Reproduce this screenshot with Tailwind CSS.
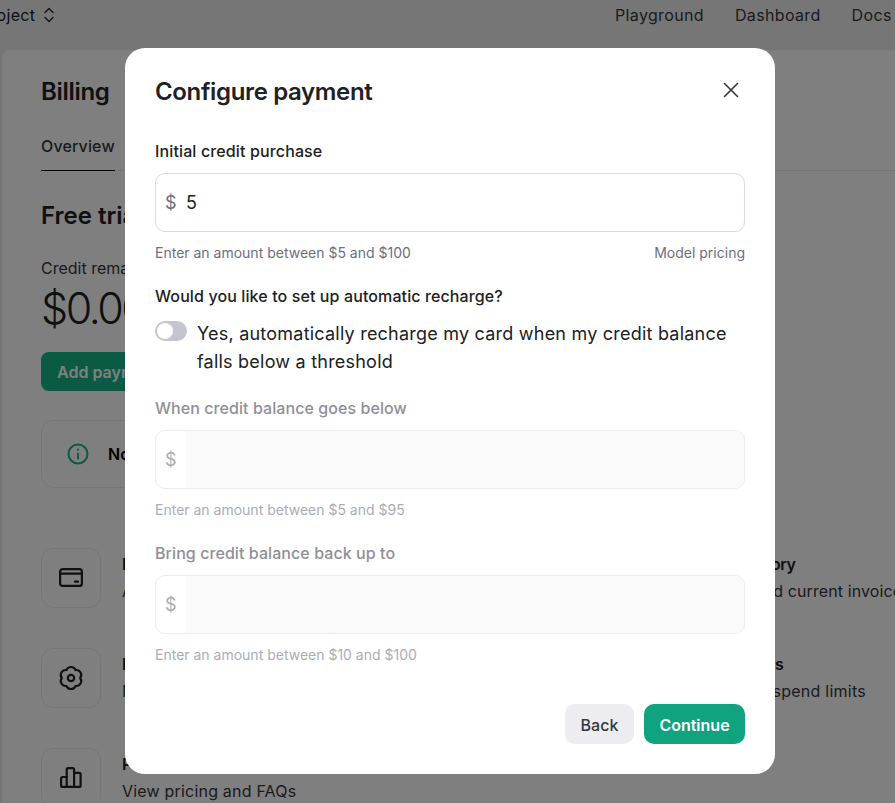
<!DOCTYPE html>
<html lang="en">
<head>
    <meta charset="UTF-8">
    <meta name="viewport" content="width=device-width, initial-scale=1.0">
    <title>Billing</title>
    <script src="https://cdn.jsdelivr.net/npm/@tailwindcss/browser@4"></script>
</head>
<body class="font-['Inter',sans-serif]">
    <div class="relative h-[803px] w-[895px] overflow-hidden bg-[#ededed] text-[#202123]">
        <!-- page behind the dialog -->
        <header class="flex h-[50px] items-center justify-between text-base tracking-[0.3px]">
            <div class="ml-[-20px] flex items-center gap-[6px] pb-[20px]">
                <span>Project</span>
                <svg class="h-4 w-4" viewBox="0 0 16 16" fill="none" stroke="currentColor" stroke-width="1.3" stroke-linecap="round" stroke-linejoin="round"><path d="M4 5.500l4-4 4 4M4 10.500l4 4 4-4"/></svg>
            </div>
            <nav class="flex w-[280px] gap-[31px] whitespace-nowrap pb-[20px] tracking-[0.35px] text-[#353740]">
                <span>Playground</span><span>Dashboard</span><span>Docs</span>
            </nav>
        </header>
        <main class="ml-[2px] h-[760px] rounded-tl-lg bg-white pl-[39px]">
            <h1 class="pt-[26px] text-2xl font-semibold leading-8 tracking-[-0.3px] text-[#202123]">Billing</h1>
            <div class="mt-[25px] h-[38px] border-b border-[#ececf1]">
                <div class="inline-block h-[38px] border-b border-black pt-[1px] text-base font-medium leading-6 tracking-[0.15px] text-[#353740]">Overview</div>
            </div>
            <h2 class="mt-[29px] text-2xl font-semibold leading-8">Free trial</h2>
            <p class="mt-[24px] text-base leading-6 text-[#353740]">Credit remaining</p>
            <p class="mt-[4px] text-[43px] font-light leading-[48px] tracking-[-2.5px]">$0.00</p>
            <button class="mt-[20px] block h-[39px] rounded-lg bg-[#15b589] px-4 text-base font-semibold text-white">Add payment details</button>
            <div class="mt-[29px] flex h-[68px] w-[700px] items-center gap-[19px] rounded-xl border border-[#ececf1] pl-[25px] pr-4">
                <svg class="h-[22px] w-[22px] text-[#15b589]" viewBox="0 0 22 22" fill="none" stroke="currentColor" stroke-width="2" stroke-linecap="round"><circle cx="11" cy="11" r="9.5"/><path d="M11 10.500v5"/><path d="M11 6.600v.1"/></svg>
                <span class="font-semibold text-black">Note</span>
            </div>
            <div class="mt-[60px] grid grid-cols-[634px_1fr] gap-y-[40px]">
                <div class="flex gap-[21px]">
                    <div class="flex h-[60px] w-[60px] items-center justify-center rounded-xl border border-[#ececf1]">
                        <svg class="h-7 w-7" viewBox="0 0 28 28" fill="none" stroke="#202123" stroke-width="2.2" stroke-linecap="round" stroke-linejoin="round"><rect x="3.100" y="5.100" width="21.800" height="16.800" rx="2.500"/><path d="M3.100 9.600h21.800"/><path d="M18 17.700h3"/></svg>
                    </div>
                    <div class="mt-[4px]"><p class="font-semibold leading-6">Payment</p><p class="mt-[3px] leading-6 text-[#353740]">Add or change</p></div>
                </div>
                <div class="mt-[4px] whitespace-nowrap"><p class="font-semibold leading-6 tracking-[-0.35px]">Payment history</p><p class="mt-[3px] leading-6 tracking-[0.1px] text-[#353740]">View past and current invoices</p></div>
                <div class="flex gap-[21px]">
                    <div class="flex h-[60px] w-[60px] items-center justify-center rounded-xl border border-[#ececf1]">
                        <svg class="h-7 w-7" viewBox="0 0 28 28" fill="none" stroke="#202123" stroke-width="2.2" stroke-linecap="round" stroke-linejoin="round"><path d="M18.600 6.030A5 5 0 0 1 23.200 14A5 5 0 0 1 18.600 21.970A5 5 0 0 1 9.400 21.970A5 5 0 0 1 4.800 14A5 5 0 0 1 9.400 6.030A5 5 0 0 1 18.600 6.030z"/><circle cx="14" cy="14" r="3.200"/></svg>
                    </div>
                    <div class="mt-[4px]"><p class="font-semibold leading-6">Preferences</p><p class="mt-[3px] leading-6 text-[#353740]">Manage</p></div>
                </div>
                <div class="mt-[4px] whitespace-nowrap"><p class="font-semibold leading-6">Monthly limits</p><p class="mt-[3px] leading-6 tracking-[0.25px] text-[#353740]">Set monthly spend limits</p></div>
                <div class="flex gap-[21px]">
                    <div class="flex h-[60px] w-[60px] items-center justify-center rounded-xl border border-[#ececf1]">
                        <svg class="h-7 w-7" viewBox="0 0 28 28" fill="none" stroke="#202123" stroke-width="2.2" stroke-linecap="round" stroke-linejoin="round"><path d="M9.700 22.900H5.600A1.500 1.500 0 0 1 4.100 21.400V14.500A1.500 1.500 0 0 1 5.600 13H9.700"/><rect x="9.700" y="4.100" width="7.400" height="18.800" rx="1.500"/><path d="M17.100 8.800H22.100A1.500 1.500 0 0 1 23.600 10.300V21.400A1.500 1.500 0 0 1 22.100 22.900H17.100"/></svg>
                    </div>
                    <div class="mt-[4px] whitespace-nowrap"><p class="font-semibold leading-6">Pricing</p><p class="mt-[3px] leading-6 tracking-[0.2px] text-[#353740]">View pricing and FAQs</p></div>
                </div>
            </div>
        </main>

        <!-- dialog overlay -->
        <div class="absolute inset-0 bg-black/50"></div>
        <section class="absolute left-[125px] top-[48px] h-[726px] w-[650px] rounded-[20px] bg-white px-[30px] text-[#202123]">
            <div class="mb-[5px] flex h-[86px] items-center justify-between pt-[1px]">
                <h2 class="text-2xl font-semibold tracking-[-0.35px]">Configure payment</h2>
                <svg class="mb-[4px] mr-[4px] h-5 w-5 text-[#353740]" viewBox="0 0 20 20" fill="none" stroke="currentColor" stroke-width="1.6" stroke-linecap="round"><path d="M3.500 3.500l13 13M16.500 3.500l-13 13"/></svg>
            </div>
            <label class="block text-base font-medium leading-6 tracking-[0.13px]">Initial credit purchase</label>
            <div class="mt-[10px] flex h-[59px] items-center rounded-[10px] border border-[#d9d9e3] bg-white pt-[1px]">
                <span class="w-[30px] pl-[9px] text-lg text-[#6e6e80]">$</span>
                <span class="text-lg">5</span>
            </div>
            <div class="mt-[11px] flex justify-between text-sm leading-5 text-[#6e6e80]">
                <span>Enter an amount between $5 and $100</span>
                <span>Model pricing</span>
            </div>
            <p class="mt-[21px] text-base font-medium leading-6 tracking-[0.11px]">Would you like to set up automatic recharge?</p>
            <div class="mt-[12px] flex gap-[10px]">
                <span class="mt-[1px] flex h-5 w-8 shrink-0 items-center rounded-full bg-[#c5c5d2] pl-[2px]"><span class="h-4 w-4 rounded-full bg-white"></span></span>
                <p class="text-lg leading-7 tracking-[0.22px]">Yes, automatically recharge my card when my credit balance falls below a threshold</p>
            </div>
            <label class="mt-[20px] block text-base font-medium leading-6 tracking-[0.07px] text-[#8f8f98]">When credit balance goes below</label>
            <div class="mt-[10px] flex h-[59px] overflow-hidden rounded-[10px] border border-[#ececf1] bg-white">
                <span class="flex w-[30px] items-center pl-[9px] text-lg text-[#acacb8]">$</span>
                <span class="flex-1 bg-[#fafafa]"></span>
            </div>
            <p class="mt-[11px] text-sm leading-5 text-[#acacb8]">Enter an amount between $5 and $95</p>
            <label class="mt-[21px] block text-base font-medium leading-6 tracking-[0.07px] text-[#8f8f98]">Bring credit balance back up to</label>
            <div class="mt-[10px] flex h-[59px] overflow-hidden rounded-[10px] border border-[#ececf1] bg-white">
                <span class="flex w-[30px] items-center pl-[9px] text-lg text-[#acacb8]">$</span>
                <span class="flex-1 bg-[#fafafa]"></span>
            </div>
            <p class="mt-[11px] text-sm leading-5 text-[#acacb8]">Enter an amount between $10 and $100</p>
            <div class="mt-[39px] flex justify-end gap-[10px]">
                <button class="h-10 w-[69px] rounded-[10px] bg-[#ececf1] pt-[1px] text-base font-medium text-[#353740]">Back</button>
                <button class="h-10 w-[101px] rounded-[10px] bg-[#10a37f] pt-[1px] text-base font-semibold text-white">Continue</button>
            </div>
        </section>
    </div>
</body>
</html>
